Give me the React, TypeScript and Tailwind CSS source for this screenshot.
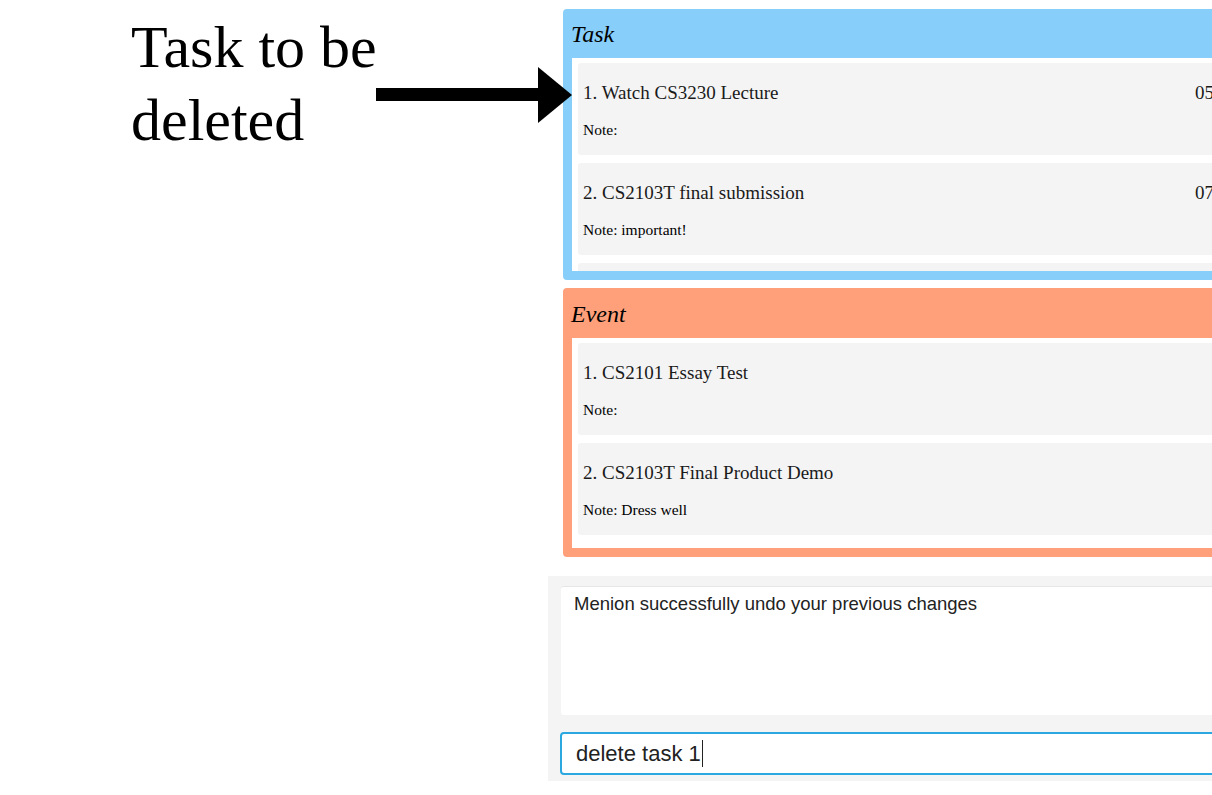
import React from "react";

type Item = { title: string; note: string; date?: string };

const serif = { fontFamily: '"Liberation Serif", "Times New Roman", serif' };

function Card({ item }: { item: Item }) {
  return (
    <div className="h-[92px] shrink-0 rounded-[3px] bg-[#f4f4f4] pl-[5px] pt-[19px] text-[#1a1a1a]">
      <div className="flex h-[22px] items-center text-[19px] leading-[22px]">
        <div className="w-[612px] shrink-0 whitespace-nowrap">{item.title}</div>
        <div className="whitespace-nowrap">{item.date ?? ""}</div>
      </div>
      <div className="mt-[16px] flex h-[20px] items-center text-[15.5px] leading-[20px] text-black">
        {item.note}
      </div>
    </div>
  );
}

function Panel({
  title,
  color,
  headerH,
  listH,
  items,
  extra,
}: {
  title: string;
  color: string;
  headerH: string;
  listH: string;
  items: Item[];
  extra?: boolean;
}) {
  return (
    <div className={`w-[900px] rounded-[4px] ${color} pb-[9px]`} style={serif}>
      <div className={`${headerH} flex items-center pl-[8px] pt-[1px] text-[24px] italic text-black`}>{title}</div>
      <div className={`ml-[9px] ${listH} overflow-hidden bg-white pl-[6px] pt-[5px]`}>
        <div className="flex flex-col gap-[8px]">
          {items.map((it, i) => (
            <Card key={i} item={it} />
          ))}
          {extra && <div className="h-[92px] shrink-0 rounded-[3px] bg-[#f4f4f4]" />}
        </div>
      </div>
    </div>
  );
}

export default function App() {
  const tasks: Item[] = [
    { title: "1. Watch CS3230 Lecture", note: "Note:", date: "05-11-2016 23:59" },
    { title: "2. CS2103T final submission", note: "Note: important!", date: "07-11-2016 23:59" },
  ];
  const events: Item[] = [
    { title: "1. CS2101 Essay Test", note: "Note:" },
    { title: "2. CS2103T Final Product Demo", note: "Note: Dress well" },
  ];
  return (
    <div className="relative flex h-[795px] w-[1212px] overflow-hidden bg-white">
      <div className="w-[548px] shrink-0 pl-[131px] pt-[11px]">
        <div className="text-[60px] leading-[73px] text-black" style={serif}>
          Task to be
          <br />
          deleted
        </div>
      </div>
      <div className="flex min-w-0 flex-1 flex-col">
        <div className="flex flex-col gap-[8px] pl-[15px] pt-[9px]">
          <Panel title="Task" color="bg-[#87cefa]" headerH="h-[49px]" listH="h-[213px]" items={tasks} extra />
          <Panel title="Event" color="bg-[#ffa07a]" headerH="h-[50px]" listH="h-[210px]" items={events} />
        </div>
        <div
          className="mt-[19px] h-[205px] w-[700px] bg-[#f4f4f4] pl-[13px] pt-[10px]"
          style={{ fontFamily: '"Liberation Sans", Arial, sans-serif' }}
        >
          <div className="h-[129px] w-[700px] rounded-[3px] border-t border-[#e6e6e6] bg-white pl-[13px] pt-[6px] text-[18.5px] leading-[22px] text-[#222]">
            Menion successfully undo your previous changes
          </div>
          <div className="ml-[-1px] mt-[17px] flex h-[43px] w-[700px] items-center rounded-[4px] border-2 border-[#2aa8df] bg-white pl-[14px] text-[22px] text-[#222]">
            <span>delete task 1</span>
            <span className="ml-[1px] inline-block h-[27px] w-[1px] bg-[#222]" />
          </div>
        </div>
      </div>
      <svg className="absolute left-[376px] top-[67px]" width="197" height="57" viewBox="0 0 197 57">
        <rect x="0" y="21" width="164" height="13" fill="#000" />
        <polygon points="162,0 196,28 162,56" fill="#000" />
      </svg>
    </div>
  );
}
